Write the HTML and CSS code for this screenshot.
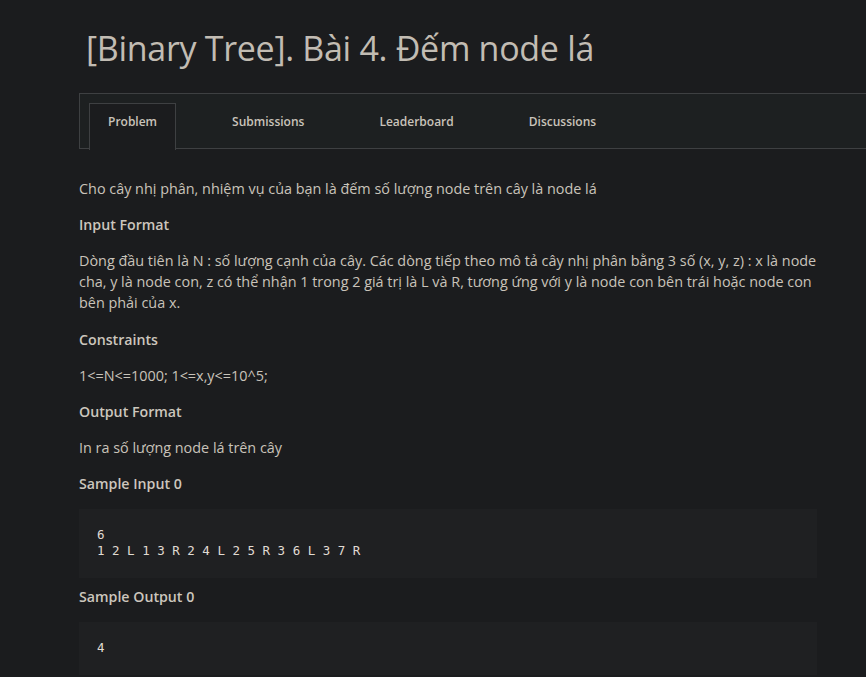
FILE: index.html
```html
<!DOCTYPE html>
<html lang="vi">
<head>
<meta charset="utf-8">
<title>[Binary Tree]. Bài 4. Đếm node lá</title>
<link rel="stylesheet" href="styles.css">
</head>
<body>
<div class="page">
  <h1 class="title">[Binary Tree]. Bài 4. Đếm node lá</h1>
  <nav class="tabs">
    <a class="tab active">Problem</a>
    <a class="tab">Submissions</a>
    <a class="tab">Leaderboard</a>
    <a class="tab">Discussions</a>
  </nav>
  <div class="content">
    <p>Cho cây nhị phân, nhiệm vụ của bạn là đếm số lượng node trên cây là node lá</p>
    <h3>Input Format</h3>
    <p class="multi">Dòng đầu tiên là N : số lượng cạnh của cây. Các dòng tiếp theo mô tả cây nhị phân bằng 3 số (x, y, z) : x là node cha, y là node con, z có thể nhận 1 trong 2 giá trị là L và R, tương ứng với y là node con bên trái hoặc node con bên phải của x.</p>
    <h3>Constraints</h3>
    <p>1&lt;=N&lt;=1000; 1&lt;=x,y&lt;=10^5;</p>
    <h3>Output Format</h3>
    <p>In ra số lượng node lá trên cây</p>
    <h3>Sample Input 0</h3>
    <pre class="code">6
1 2 L 1 3 R 2 4 L 2 5 R 3 6 L 3 7 R</pre>
    <h3>Sample Output 0</h3>
    <pre class="code">4
</pre>
  </div>
</div>
</body>
</html>
```

FILE: styles.css
```css
html, body {
  margin: 0;
  padding: 0;
  background: #1b1c1e;
  overflow: hidden;
}
body {
  font-family: "Open Sans", "Noto Sans", sans-serif;
  color: #c9c3ba;
}
.page {
  padding-left: 79px;
  width: 740px;
}
.title {
  margin: 0;
  padding: 25px 0 0 7px;
  height: 67px;
  box-sizing: border-box;
  font-size: 34px;
  font-weight: 400;
  line-height: 46px;
  color: #c2bcb3;
  letter-spacing: -0.3px;
}
.tabs {
  display: flex;
  gap: 37px;
  width: 820px;
  height: 56px;
  box-sizing: border-box;
  margin-top: 26px;
  padding: 9px 0 0 9px;
  background: #1d2021;
  border: 1px solid #3e4042;
}
.tab {
  display: block;
  padding: 8px 18px 0;
  height: 46px;
  box-sizing: border-box;
  font-size: 12px;
  line-height: 20px;
  font-weight: 600;
  color: #c9c3ba;
  border: 1px solid transparent;
  border-bottom: none;
}
.tab.active {
  background: #1b1c1e;
  border-color: #3e4042;
  height: 47px;
  position: relative;
  z-index: 1;
}
.content {
  padding-top: 29px;
}
.content p, .content h3 {
  font-size: 14.4px;
  line-height: 21px;
  margin: 0 0 15px;
}
.content p.multi {
  margin-bottom: 16px;
}
.content h3 {
  font-size: 14.2px;
  font-weight: 600;
  color: #ccc6bd;
}
.code {
  width: 738px;
  box-sizing: border-box;
  margin: 2px 0 8px;
  padding: 18px 18px 19px;
  background: #1f2022;
  font-family: "DejaVu Sans Mono", monospace;
  font-size: 12.5px;
  line-height: 16px;
  color: #e0dbd3;
}
```
